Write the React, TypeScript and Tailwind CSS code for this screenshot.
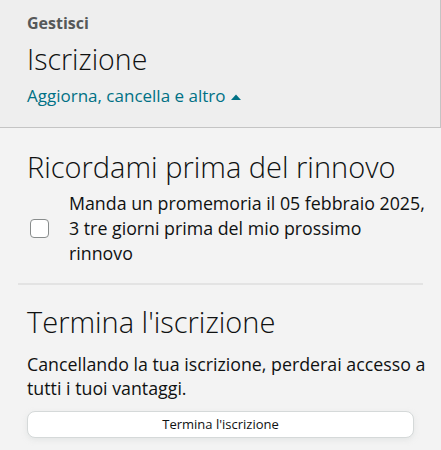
import React from "react";

export default function App() {
  const font = { fontFamily: '"Open Sans", "Liberation Sans", Arial, sans-serif' };
  return (
    <div className="w-[441px] h-[450px] bg-[#f3f3f3] text-[#0f1111] overflow-hidden" style={font}>
      <div className="h-[128px] bg-[#eeeeee] border-b border-r border-[#c4c4c4] px-[27px] pt-[13px]">
        <div className="text-[16px] font-bold text-[#565959] leading-[20px]">Gestisci</div>
        <div className="text-[28.5px] font-light leading-[36px] mt-[8px] text-[#0f1111]">Iscrizione</div>
        <div className="mt-[8px] flex items-center text-[17px] leading-[22px] text-[#007185]">
          <span>Aggiorna, cancella e altro</span>
          <svg width="12" height="8" viewBox="0 0 12 8" className="ml-[5px] mt-[1px]">
            <polygon points="1,7 6,1.5 11,7" fill="#007185" />
          </svg>
        </div>
      </div>

      <div className="px-[27px] pt-[21px]">
        <div className="text-[29px] font-light leading-[36px]">Ricordami prima del rinnovo</div>
        <div className="flex items-center mt-[6px]">
          <div className="w-[19px] h-[19px] ml-[3px] rounded-[4px] border border-[#888c8c] bg-white shrink-0" />
          <div className="ml-[20px] text-[17.8px] leading-[25px] whitespace-nowrap">
            Manda un promemoria il 05 febbraio 2025,
            <br />3 tre giorni prima del mio prossimo
            <br />rinnovo
          </div>
        </div>
      </div>

      <div className="mx-[18px] mt-[17px] h-[2px] bg-[#e3e3e3]" />

      <div className="px-[27px] pt-[19px]">
        <div className="text-[29px] font-light leading-[36px]">Termina l'iscrizione</div>
        <div className="mt-[12px] text-[17.8px] leading-[24px] whitespace-nowrap">
          Cancellando la tua iscrizione, perderai accesso a
          <br />tutti i tuoi vantaggi.
        </div>
        <button className="mt-[11px] w-full h-[27px] rounded-[8px] bg-white border border-[#d5d9d9] shadow-[0_2px_5px_rgba(213,217,217,0.5)] text-[13px] leading-[25px] text-[#0f1111]">
          Termina l'iscrizione
        </button>
      </div>
    </div>
  );
}
